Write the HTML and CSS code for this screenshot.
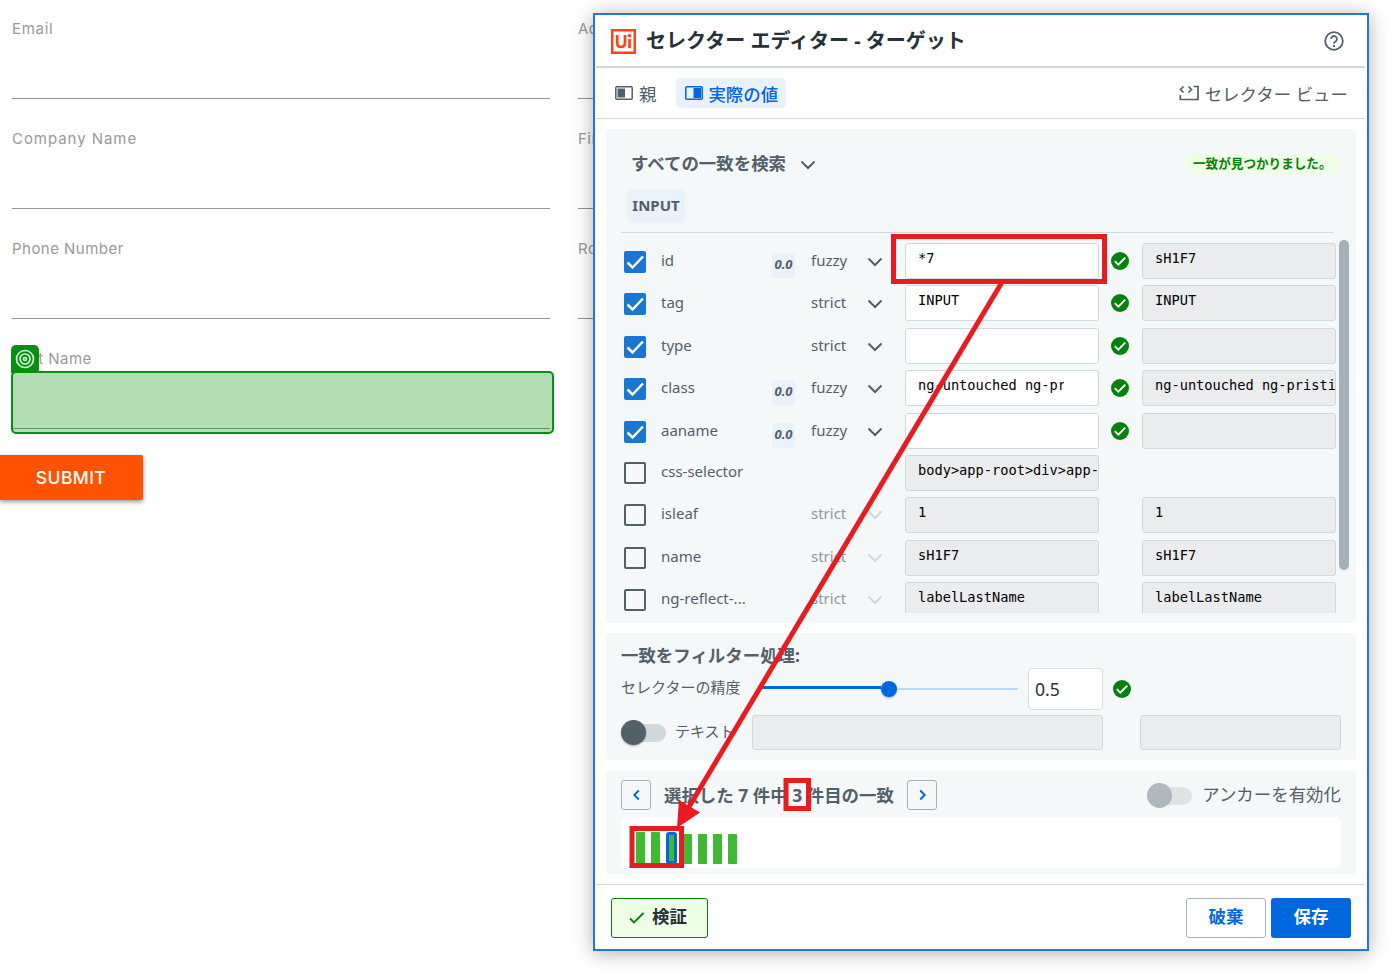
FILE: index.html
```html
<!DOCTYPE html>
<html lang="ja">
<head>
<meta charset="utf-8">
<title>セレクター エディター</title>
<link rel="stylesheet" href="styles.css">
</head>
<body>
<svg class="defs" width="0" height="0">
  <symbol id="chev" viewBox="0 0 16 10"><path d="M1.5 1.5 8 8l6.500-6.500" fill="none" stroke="currentColor" stroke-width="2"/></symbol>
  <symbol id="tick" viewBox="0 0 22 22"><path d="M3.500 11.500 8.500 16.500 19 5.500" fill="none" stroke="#fff" stroke-width="2.500"/></symbol>
  <symbol id="ok" viewBox="0 0 18 18"><circle cx="9" cy="9" r="9" fill="#038108"/><path d="M3.800 9.200 7.300 12.700 14.300 5.700" fill="none" stroke="#fff" stroke-width="1.900"/></symbol>
</svg>
<main class="screen">
  <section class="form">
    <div class="fields">
      <div class="field first"><label>Email</label></div>
      <div class="field"><label>Address</label></div>
      <div class="field company"><label>Company Name</label></div>
      <div class="field"><label>First Name</label></div>
      <div class="field"><label>Phone Number</label></div>
      <div class="field"><label>Role in Company</label></div>
      <div class="field last"><label>Last Name</label>
        <div class="target"></div>
        <div class="target-tab"><svg width="20" height="20" viewBox="0 0 20 20" fill="none" stroke="#d5efd6" stroke-width="1.700"><circle cx="10" cy="10" r="8.500"/><circle cx="10" cy="10" r="5"/><circle cx="10" cy="10" r="1.500"/></svg></div>
      </div>
    </div>
    <button class="submit">SUBMIT</button>
  </section>

  <section class="dialog">
    <header class="head">
      <svg class="logo" width="25" height="25" viewBox="0 0 25 25"><rect width="25" height="25" fill="#fa4616"/><rect x="2.500" y="2.500" width="20" height="20" fill="#fff"/><path d="M6.200 6v7.500q0 4.500 3.900 4.500t3.900-4.500V6M18.500 10v9.200" fill="none" stroke="#fa4616" stroke-width="2.700"/><circle cx="18.500" cy="6.800" r="1.800" fill="#fa4616"/></svg>
      <h1>セレクター エディター - ターゲット</h1>
      <svg class="help" width="20" height="20" viewBox="0 0 20 20" fill="none" stroke="#526069" stroke-width="1.800"><circle cx="10" cy="10" r="8.800"/><path d="M7.100 8a2.900 2.900 0 1 1 4.700 2.200Q10 11.300 10 12.700M10 14v2"/></svg>
    </header>
    <nav class="tabs">
      <a class="tab"><svg width="18" height="14" viewBox="0 0 18 14"><rect x=".8" y=".8" width="16.400" height="12.400" rx="1" fill="#fff" stroke="#526069" stroke-width="1.500"/><path d="M2.500 2.500H10v9H2.500z" fill="#526069"/></svg><span>親</span></a>
      <a class="tab active"><svg width="18" height="14" viewBox="0 0 18 14"><rect x=".8" y=".8" width="16.400" height="12.400" rx="1" fill="#e9f1fa" stroke="#0067df" stroke-width="1.500"/><path d="M8.500 2h7.500v10H8.500z" fill="#0067df"/></svg><span>実際の値</span></a>
      <a class="view"><svg width="20" height="16" viewBox="0 0 20 16" fill="none" stroke="#526069" stroke-width="1.700"><path d="M4.500 1.500 1.500 4.500l3 3M9.500 1.500l3 3-3 3M14.500 1.500H19v13H1.300V10"/></svg>セレクター ビュー</a>
    </nav>

    <div class="card search">
      <div class="search-top"><span class="search-title">すべての一致を検索</span><svg class="chev" width="16" height="10"><use href="#chev"/></svg><span class="found">一致が見つかりました。</span></div>
      <div class="chip"><span>INPUT</span></div>
      <div class="attrs">
        <div class="rows">
          <div class="row"><i class="box on"><svg><use href="#tick"/></svg></i><span class="name">id</span><b class="score">0.0</b><span class="mode">fuzzy</span><svg class="chev"><use href="#chev"/></svg><div class="inp"><span>*7</span></div><svg class="ok"><use href="#ok"/></svg><div class="inp ro"><span>sH1F7</span></div></div>
          <div class="row"><i class="box on"><svg><use href="#tick"/></svg></i><span class="name">tag</span><b></b><span class="mode">strict</span><svg class="chev"><use href="#chev"/></svg><div class="inp"><span>INPUT</span></div><svg class="ok"><use href="#ok"/></svg><div class="inp ro"><span>INPUT</span></div></div>
          <div class="row"><i class="box on"><svg><use href="#tick"/></svg></i><span class="name">type</span><b></b><span class="mode">strict</span><svg class="chev"><use href="#chev"/></svg><div class="inp"></div><svg class="ok"><use href="#ok"/></svg><div class="inp ro"></div></div>
          <div class="row"><i class="box on"><svg><use href="#tick"/></svg></i><span class="name">class</span><b class="score">0.0</b><span class="mode">fuzzy</span><svg class="chev"><use href="#chev"/></svg><div class="inp"><span class="short">ng-untouched ng-pr</span></div><svg class="ok"><use href="#ok"/></svg><div class="inp ro"><span>ng-untouched ng-pristi</span></div></div>
          <div class="row"><i class="box on"><svg><use href="#tick"/></svg></i><span class="name">aaname</span><b class="score">0.0</b><span class="mode">fuzzy</span><svg class="chev"><use href="#chev"/></svg><div class="inp"></div><svg class="ok"><use href="#ok"/></svg><div class="inp ro"></div></div>
          <div class="row lower"><i class="box"></i><span class="name">css-selector</span><b></b><span></span><span></span><div class="inp ro"><span>body&gt;app-root&gt;div&gt;app-</span></div></div>
          <div class="row lower off"><i class="box"></i><span class="name">isleaf</span><b></b><span class="mode">strict</span><svg class="chev"><use href="#chev"/></svg><div class="inp ro"><span>1</span></div><span></span><div class="inp ro"><span>1</span></div></div>
          <div class="row lower off"><i class="box"></i><span class="name">name</span><b></b><span class="mode">strict</span><svg class="chev"><use href="#chev"/></svg><div class="inp ro"><span>sH1F7</span></div><span></span><div class="inp ro"><span>sH1F7</span></div></div>
          <div class="row lower off"><i class="box"></i><span class="name">ng-reflect-...</span><b></b><span class="mode">strict</span><svg class="chev"><use href="#chev"/></svg><div class="inp ro"><span>labelLastName</span></div><span></span><div class="inp ro"><span>labelLastName</span></div></div>
        </div>
        <div class="scroll"></div>
      </div>
    </div>

    <div class="card filter">
      <h2>一致をフィルター処理:</h2>
      <div class="accuracy"><span>セレクターの精度</span><div class="slider"><div class="fill"></div><div class="knob"></div><div class="rest"></div></div><div class="num">0.5</div><svg class="ok"><use href="#ok"/></svg></div>
      <div class="textrow"><div class="switch"><i></i></div><span>テキスト</span><div class="inp ro wide"></div><div class="inp ro"></div></div>
    </div>

    <div class="card matches">
      <div class="pager">
        <button><svg width="8" height="12" viewBox="0 0 8 12"><path d="M6.800 1.500 2.300 6l4.500 4.500" fill="none" stroke="#0067df" stroke-width="1.900"/></svg></button>
        <strong>選択した 7 件中 3 件目の一致</strong>
        <button><svg width="8" height="12" viewBox="0 0 8 12"><path d="M2.200 1.500 6.700 6l-4.500 4.500" fill="none" stroke="#0067df" stroke-width="1.900"/></svg></button>
        <div class="switch dim"><i></i></div><span class="anchor">アンカーを有効化</span>
      </div>
      <div class="bars"><i class="tall"></i><i class="tall"></i><i class="tall cur"></i><i></i><i></i><i></i><i></i></div>
    </div>

    <footer class="foot">
      <button class="validate"><svg width="16" height="12" viewBox="0 0 16 12"><path d="M1 6.500 5 10.500 14.500 1" fill="none" stroke="#038108" stroke-width="1.800"/></svg><span>検証</span></button>
      <button class="discard">破棄</button>
      <button class="save">保存</button>
    </footer>
  </section>

  <svg class="marks" width="1392" height="973" viewBox="0 0 1392 973">
    <g fill="none" stroke="#e81c20" stroke-width="5">
      <rect x="893.500" y="236.500" width="211" height="45"/>
      <rect x="786" y="780.500" width="22.500" height="28"/>
      <rect x="632" y="828.500" width="49.500" height="37"/>
      <path d="M1001.500 283 688 808.500"/>
    </g>
    <path d="M677 828 679 800 700 812.500z" fill="#e81c20"/>
  </svg>
</main>
</body>
</html>
```
FILE: styles.css
```css
* { box-sizing: border-box; }
body { margin: 0; background: #fff; }
body, button { font-family: "Noto Sans", "Noto Sans CJK JP", sans-serif; color: #526069; }
h1, h2 { margin: 0; }
button { padding: 0; }
svg { display: block; flex: none; }
.defs { position: absolute; }
.screen { position: relative; width: 1392px; height: 973px; overflow: hidden; }

.form { padding-top: 16px; }
.fields { display: grid; grid-template-columns: 538px 538px; column-gap: 28px; row-gap: 27px; margin-left: 12px; }
.field { height: 83px; border-bottom: 1px solid #949494; line-height: 26px; font-family: Inter, sans-serif; font-size: 15px; letter-spacing: .47px; color: #999; }
.first { line-height: 25px; letter-spacing: .7px; }
.company { letter-spacing: .95px; }
.last { position: relative; }
.target { position: absolute; left: -1px; top: 25px; width: 543px; height: 63px; border: 2.500px solid #078f10; border-radius: 5px; background: rgba(3,143,11,.3); }
.target-tab { position: absolute; left: -1px; top: -1px; width: 28px; height: 28px; padding: 4px 0 0 4px; background: #078f10; border-radius: 5px 5px 0 0; }
.submit { display: block; margin-top: 26px; width: 143px; height: 45px; padding-right: 1px; border: 0; border-radius: 0 2px 2px 0; background: #ff5203; color: #fff; font: 500 17.500px Inter, sans-serif; letter-spacing: .4px; box-shadow: 0 2px 4px rgba(0,0,0,.4); }

.dialog { position: absolute; left: 593px; top: 13px; width: 776px; height: 938px; border: 2px solid #2277cf; background: #fff; box-shadow: 0 2px 18px rgba(0,0,0,.32); }
.head { display: flex; align-items: center; height: 53px; margin: 0 2px 0 1px; padding: 0 21px 0 15px; border-bottom: 2px solid #cfd8dd; }
.logo { margin-top: 2px; }
.head h1 { margin-left: 10px; font-size: 20px; line-height: 28px; font-weight: 700; color: #273139; white-space: nowrap; }
.help { margin-left: auto; }
.tabs { display: flex; align-items: center; height: 51px; margin: 0 2px 0 1px; padding-left: 11px; border-bottom: 1px solid #cfd8dd; font-size: 17.450px; }
.tab { display: flex; align-items: center; gap: 6px; height: 30px; padding: 0 8px; border-radius: 4px; line-height: 30px; white-space: nowrap; }
.tab span { padding-top: 2px; }
.tab.active { margin-left: 12px; background: #e9f1fa; color: #0067df; font-weight: 500; }
.tab.active svg { margin-left: 1px; margin-right: -1px; }
.view { display: flex; align-items: center; gap: 6px; margin-left: auto; margin-right: 17px; }
.card { margin: 10px 11px 0 11px; border-radius: 4px; background: #f4f8f9; }

.search { height: 494px; padding-top: 20px; }
.search-top { display: flex; align-items: center; height: 30px; padding: 0 15px 0 25px; }
.search-title { margin-top: -3px; font-size: 17.450px; font-weight: 700; }
.search-top .chev { margin-left: 14px; margin-top: 2px; }
.found { margin-left: auto; width: 157px; height: 20px; line-height: 19px; padding-left: 9px; border-radius: 10px; background: #eeffe5; color: #038108; font-size: 12.600px; font-weight: 700; white-space: nowrap; }
.chip { height: 54px; margin: 0 22px 0 15px; padding: 10px 6px 0; border-bottom: 1px solid #cfd8dd; }
.chip span { display: block; width: 58px; height: 34px; line-height: 33px; text-align: center; border-radius: 5px; background: #e9f1fa; font-size: 15px; font-weight: 700; }
.attrs { display: flex; height: 380px; padding-left: 18px; }
.rows { width: 715px; height: 380px; padding-top: 10px; overflow: hidden; }
.row { display: grid; grid-template-columns: 37px 111px 39px 56px 38px 194px 43px 194px; height: 42.400px; align-items: start; font-size: 15px; }
.box { width: 22px; height: 22px; margin-top: 8px; border: 2px solid #526069; border-radius: 2px; }
.box.on { border: 0; background: #1976d2; }
.box svg { width: 22px; height: 22px; }
.name { line-height: 34px; }
.mode { line-height: 35px; }
.lower .name { line-height: 32px; }
.lower .mode { line-height: 32px; }
.lower .box { margin-top: 7px; }
.score { width: 23px; height: 25px; margin-top: 10px; line-height: 23px; text-align: center; border-radius: 2px; background: #e9f1fa; font-size: 13px; font-style: italic; }
.row .chev { width: 16px; height: 10px; margin-top: 14px; }
.row.lower .chev { margin-top: 13px; }
.ok { width: 18px; height: 18px; }
.row .ok { margin: 9px 0 0 12px; }
.inp { height: 36px; border: 1px solid #cfd8dd; border-radius: 3px; background: #fff; padding-left: 12px; overflow: hidden; color: #000; font: 13.670px/29px "DejaVu Sans Mono", monospace; white-space: nowrap; }
.inp.ro { background: #ebecee; }
.short { display: block; width: 146px; overflow: hidden; }
.off .mode { color: #8f999f; }
.off .chev { color: #cfd8dd; }
.scroll { width: 10px; height: 330px; margin: 7px 0 0 0; border-radius: 5px; background: #a4b1b8; }

.filter { height: 127px; padding: 7px 15px 0; }
.filter h2 { height: 28px; line-height: 30px; font-size: 17.450px; white-space: nowrap; }
.accuracy { display: flex; align-items: center; height: 42px; font-size: 15px; white-space: nowrap; }
.accuracy > span { width: 141px; line-height: 24px; margin-top: -5px; }
.slider { display: flex; align-items: center; width: 256px; }
.fill { width: 119px; height: 3px; margin-top: -3px; background: #0067df; }
.knob { width: 16px; height: 16px; border-radius: 8px; background: #0067df; box-shadow: 0 1px 2px rgba(0,0,0,.3); }
.rest { flex: 1; height: 2px; background: #b9dafd; }
.num { width: 75px; height: 42px; margin: 0 10px; padding-left: 6px; line-height: 40px; border: 1px solid #dadde0; border-radius: 4px; background: #fff; color: #273139; font-size: 17.600px; }
.textrow { display: flex; align-items: center; height: 35px; margin-top: 5px; font-size: 15px; }
.textrow > span { width: 77px; margin-left: 9px; line-height: 30px; margin-top: -4px; white-space: nowrap; }
.textrow .inp { width: 201px; height: 35px; margin-left: 37px; }
.textrow .wide { width: 351px; margin-left: 0; }
.switch { display: flex; align-items: center; width: 45px; height: 18px; border-radius: 9px; background: #cfd8dd; }
.switch i { width: 25px; height: 25px; flex: none; border-radius: 13px; background: #526069; box-shadow: 0 1px 2px rgba(0,0,0,.3); }
.dim { background: #dfe3e4; }
.dim i { background: #afb8bc; box-shadow: none; }

.matches { height: 104px; padding: 10px 15px 0; }
.pager { display: flex; align-items: center; height: 30px; font-size: 17.450px; white-space: nowrap; }
.pager button { display: flex; align-items: center; justify-content: center; width: 30px; height: 30px; border: 1px solid #a4b1b8; border-radius: 3px; background: transparent; }
.pager strong { width: 243px; margin-left: 13px; line-height: 30px; }
.pager .dim { margin-left: auto; margin-right: 10px; margin-top: 1px; }
.anchor { margin-top: -3px; }
.bars { display: flex; align-items: flex-end; gap: 6px; height: 51px; margin-top: 7px; padding: 0 0 4px 15px; border-radius: 5px; background: #fff; }
.bars i { width: 9px; height: 30px; border-radius: 1px; background: #3dba31; }
.bars .tall { height: 32px; }
.bars .cur { width: 11px; border: 3px solid #0067df; border-radius: 3px; }
.bars .cur + i { margin-left: 0; }

.foot { display: flex; align-items: flex-start; height: 65px; margin: 10px 2px 0 1px; padding: 13px 14px 0 15px; border-top: 1px solid #cfd8dd; }
.foot button { height: 40px; padding-bottom: 4px; border-radius: 3px; font-size: 17.450px; font-weight: 700; line-height: 30px; }
.validate { display: flex; align-items: center; justify-content: center; gap: 7px; width: 97px; border: 1px solid #038108; background: #eeffe5; color: #273139; }
.foot .validate { padding-right: 3px; }
.validate svg { margin-top: 4px; }
.discard { width: 80px; margin-left: auto; border: 1px solid #a4b1b8; background: #fff; color: #0067df; }
.save { width: 80px; margin-left: 5px; border: 0; background: #0067df; color: #fff; }
.marks { position: absolute; left: 0; top: 0; pointer-events: none; }
```
